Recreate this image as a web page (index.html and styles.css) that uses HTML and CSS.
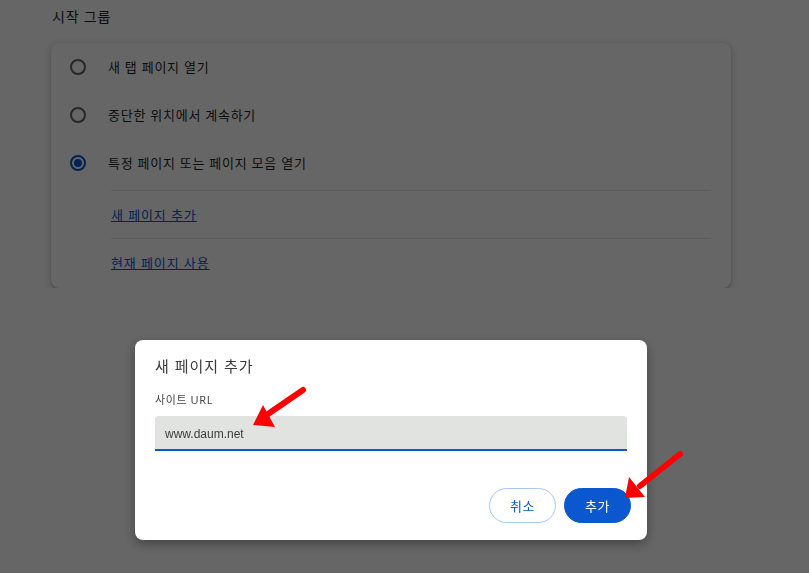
FILE: index.html
```html
<!DOCTYPE html>
<html lang="ko">
<head>
<meta charset="utf-8">
<title>시작 그룹</title>
<link rel="stylesheet" href="styles.css">
</head>
<body>
<div class="page">
  <div class="section-title">시작 그룹</div>
  <div class="card">
    <div class="radio-row"><span class="radio"></span><span class="radio-label">새 탭 페이지 열기</span></div>
    <div class="radio-row"><span class="radio"></span><span class="radio-label">중단한 위치에서 계속하기</span></div>
    <div class="radio-row"><span class="radio checked"></span><span class="radio-label">특정 페이지 또는 페이지 모음 열기</span></div>
    <div class="links">
      <div class="link-row"><a class="link" href="#">새 페이지 추가</a></div>
      <div class="link-row"><a class="link" href="#">현재 페이지 사용</a></div>
    </div>
  </div>
</div>

<div class="overlay"></div>

<div class="dialog">
  <div class="dialog-title">새 페이지 추가</div>
  <div class="field-label">사이트 URL</div>
  <div class="input">www.daum.net</div>
  <div class="actions">
    <button class="btn btn-outline">취소</button>
    <button class="btn btn-primary">추가</button>
  </div>
</div>

<svg class="arrows" width="809" height="573" viewBox="0 0 809 573" xmlns="http://www.w3.org/2000/svg">
  <line x1="303" y1="390" x2="268" y2="414" stroke="#ff0000" stroke-width="6" stroke-linecap="round"/>
  <polygon points="253,425 263,405 275,427" fill="#ff0000"/>
  <line x1="680" y1="454" x2="640" y2="486" stroke="#ff0000" stroke-width="6" stroke-linecap="round"/>
  <polygon points="625,498 629,477 645,497" fill="#ff0000"/>
</svg>
</body>
</html>
```

FILE: styles.css
```css
* { box-sizing: border-box; }

html, body {
  margin: 0;
  padding: 0;
  background: #ffffff;
  font-family: "Noto Sans", "Noto Sans CJK KR", sans-serif;
  color: #1f1f1f;
}

.page {
  padding: 7px 0 0 51px;
}

.section-title {
  font-size: 14px;
  line-height: 20px;
  padding-left: 1px;
  letter-spacing: 0.8px;
  color: #1f1f1f;
}

.card {
  margin-top: 16px;
  width: 680px;
  background: #ffffff;
  border-radius: 8px;
  box-shadow: 0 1px 2px rgba(60, 64, 67, 0.3), 0 2px 6px 2px rgba(60, 64, 67, 0.15);
  padding-bottom: 2px;
}

.radio-row {
  height: 48px;
  display: flex;
  align-items: center;
  padding-left: 19px;
}

.radio {
  width: 16px;
  height: 16px;
  border: 2px solid #5f6368;
  border-radius: 50%;
  display: flex;
  align-items: center;
  justify-content: center;
  flex: none;
}

.radio.checked {
  border-color: #0b57d0;
}

.radio.checked::after {
  content: "";
  width: 8px;
  height: 8px;
  border-radius: 50%;
  background: #0b57d0;
}

.radio-label {
  margin-left: 22px;
  font-size: 13px;
  line-height: 20px;
  letter-spacing: 0.75px;
  color: #1f1f1f;
}

.links {
  margin: 3px 20px 0 60px;
}

.link-row {
  height: 48px;
  display: flex;
  align-items: center;
  border-top: 1px solid #e3e3e3;
}

.link {
  font-size: 13px;
  line-height: 20px;
  letter-spacing: 0.9px;
  color: #0b57d0;
  text-decoration: underline;
}

.overlay {
  position: fixed;
  inset: 0;
  background: rgba(0, 0, 0, 0.6);
}

.dialog {
  position: fixed;
  left: 135px;
  top: 340px;
  width: 512px;
  height: 200px;
  background: #ffffff;
  border-radius: 8px;
  box-shadow: 0 4px 12px rgba(0, 0, 0, 0.35);
  padding: 16px 16px 17px 20px;
  display: flex;
  flex-direction: column;
}

.dialog-title {
  font-size: 15px;
  line-height: 20px;
  letter-spacing: 1px;
  color: #3c3c3c;
}

.field-label {
  margin-top: 16px;
  font-size: 11px;
  line-height: 16px;
  letter-spacing: 0.6px;
  color: #474747;
}

.input {
  margin-top: 8px;
  margin-right: 4px;
  height: 35px;
  background: #e1e3e1;
  border-bottom: 2px solid #0b57d0;
  border-radius: 4px 4px 0 0;
  padding: 3px 0 0 10px;
  display: flex;
  align-items: center;
  font-family: "Liberation Sans", "Noto Sans CJK KR", sans-serif;
  font-size: 12px;
  color: #3c3c3c;
}

.actions {
  margin-top: auto;
  display: flex;
  justify-content: flex-end;
  gap: 8px;
}

.btn {
  width: 67px;
  height: 35px;
  border-radius: 18px;
  font-family: "Noto Sans", "Noto Sans CJK KR", sans-serif;
  font-size: 13px;
  font-weight: 400;
  letter-spacing: 0.6px;
  padding: 0;
  cursor: pointer;
}

.btn-outline {
  background: #ffffff;
  border: 1px solid #a8c7fa;
  color: #0b57d0;
}

.btn-primary {
  background: #0b57d0;
  border: 1px solid #0b57d0;
  color: #ffffff;
}

.arrows {
  position: fixed;
  left: 0;
  top: 0;
  pointer-events: none;
}
```
